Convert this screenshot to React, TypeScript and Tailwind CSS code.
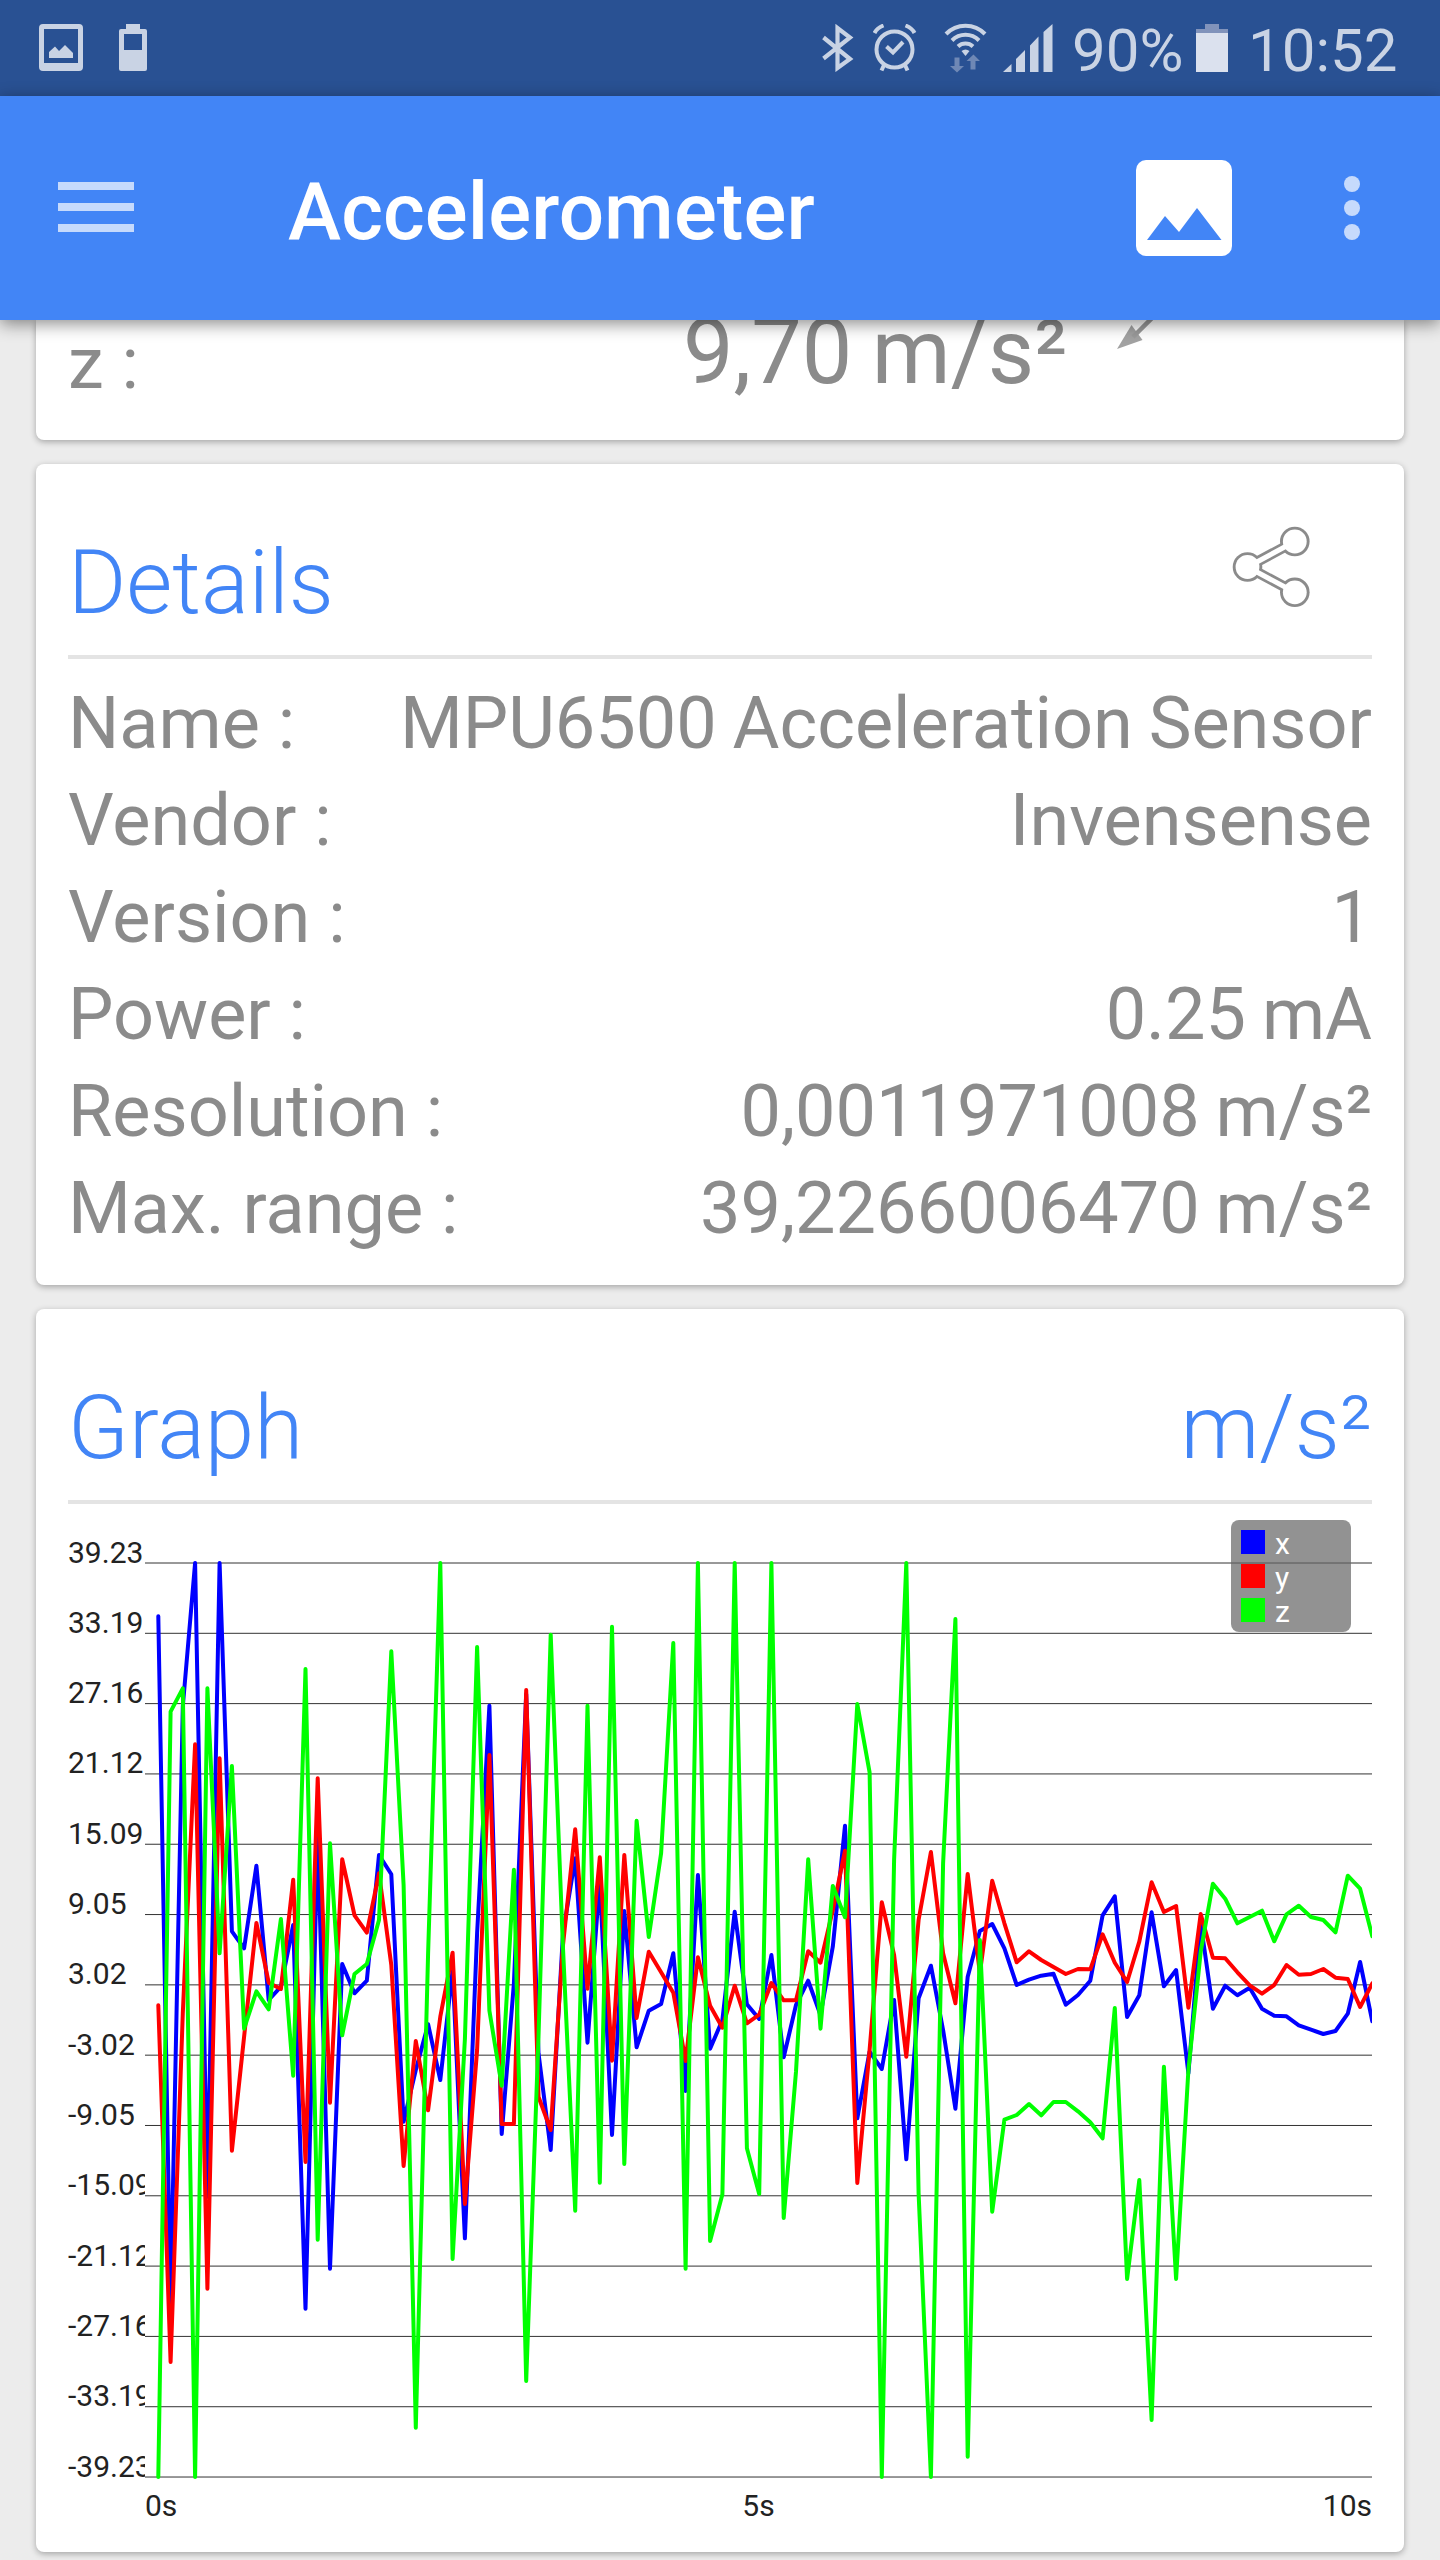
const DETAILS = [
  ["Name :", "MPU6500 Acceleration Sensor"],
  ["Vendor :", "Invensense"],
  ["Version :", "1"],
  ["Power :", "0.25 mA"],
  ["Resolution :", "0,0011971008 m/s²"],
  ["Max. range :", "39,2266006470 m/s²"],
];

const Y_LABELS = [
  "39.23", "33.19", "27.16", "21.12", "15.09", "9.05", "3.02",
  "-3.02", "-9.05", "-15.09", "-21.12", "-27.16", "-33.19", "-39.23",
];

// sample heights, 69 = +39.23 and 2811 = -39.23, one every 0.1s
const TOP = 69;
const X_SAMPLES = [
  229, 2290, 500, 69, 1970, 69, 1174, 1225, 977, 1380, 1340, 1155, 2306, 890, 2186, 1272, 1360, 1322, 945, 1003,
  1745, 1590, 1453, 1620, 1290, 2095, 1180, 497, 1782, 1330, 462, 1540, 1830, 1180, 955, 1508, 1020, 1785, 1113, 1522,
  1412, 1392, 1240, 1653, 1005, 1526, 1440, 1115, 1393, 1437, 1245, 1552, 1395, 1322, 1425, 1220, 857, 1735, 1535, 1587,
  1380, 1858, 1375, 1277, 1470, 1706, 1310, 1173, 1152, 1225, 1335, 1319, 1307, 1301, 1394, 1365, 1322, 1126, 1069, 1431,
  1366, 1117, 1339, 1290, 1600, 1150, 1406, 1337, 1366, 1343, 1406, 1427, 1429, 1456, 1469, 1482, 1473, 1421, 1266, 1444,
];
const Y_SAMPLES = [
  1396, 2466, 1420, 613, 2246, 655, 1832, 1490, 1149, 1328, 1347, 1019, 1866, 715, 1688, 958, 1126, 1178, 1000, 1275,
  1878, 1503, 1711, 1430, 1238, 1992, 1530, 645, 1752, 1752, 450, 1670, 1770, 1215, 868, 1346, 952, 1562, 945, 1434,
  1235, 1297, 1358, 1563, 1252, 1397, 1463, 1337, 1450, 1424, 1329, 1381, 1381, 1234, 1268, 1110, 932, 1929, 1530, 1087,
  1245, 1550, 1140, 936, 1240, 1390, 1002, 1300, 1022, 1150, 1267, 1234, 1260, 1281, 1302, 1287, 1288, 1183, 1268, 1326,
  1205, 1027, 1116, 1098, 1403, 1122, 1253, 1255, 1297, 1336, 1361, 1335, 1275, 1304, 1302, 1287, 1313, 1317, 1401, 1330,
];
const Z_SAMPLES = [
  2811, 515, 445, 2811, 445, 1240, 678, 1466, 1354, 1408, 1137, 1607, 387, 2099, 910, 1486, 1302, 1272, 1140, 334,
  1035, 2663, 1240, 69, 2157, 1497, 321, 1412, 1637, 989, 2523, 1490, 284, 1225, 2012, 497, 1928, 260, 1872, 842,
  1191, 940, 309, 2186, 69, 2103, 1963, 69, 1825, 1962, 69, 2034, 1595, 958, 1466, 1038, 1132, 492, 697, 2811,
  960, 69, 1960, 2811, 970, 237, 2750, 1200, 2015, 1739, 1725, 1692, 1726, 1686, 1686, 1714, 1747, 1795, 1404, 2217,
  1920, 2640, 1580, 2217, 1590, 1235, 1031, 1076, 1150, 1131, 1112, 1204, 1123, 1097, 1131, 1140, 1177, 1007, 1046, 1189,
];

const SERIES = [
  { name: "x", color: "#0000ff", samples: X_SAMPLES },
  { name: "y", color: "#ff0000", samples: Y_SAMPLES },
  { name: "z", color: "#00ff00", samples: Z_SAMPLES },
];

function toPoints(samples: number[]) {
  return samples.map((s, i) => `${(90.3 + i * 12.263).toFixed(1)},${(59 + (s - TOP) / 3).toFixed(1)}`).join(" ");
}

function StatusBar() {
  return (
    <div className="flex h-24 items-start bg-[#295193] pt-6 text-[#c9d3e4]">
      <svg className="ml-[39px] h-12 w-11" viewBox="0 0 44 48" fill="currentColor">
        <path fillRule="evenodd" d="M4 0h36a4 4 0 0 1 4 4v39a4 4 0 0 1-4 4H4a4 4 0 0 1-4-4V4a4 4 0 0 1 4-4zM5 5v34h34V5z" />
        <path d="M10 34v-6l6-5.500 4 4.500 6-6 8 8v5z" />
      </svg>
      <svg className="ml-9 h-12 w-7" viewBox="0 0 28 48" fill="currentColor">
        <path fillRule="evenodd" d="M7 0h14v5h5a2 2 0 0 1 2 2v38a2 2 0 0 1-2 2H2a2 2 0 0 1-2-2V7a2 2 0 0 1 2-2h5zM5 10v16h18V10z" />
      </svg>

      <svg className="ml-[675px] h-12 w-8" viewBox="0 0 32 48" fill="none" stroke="currentColor" strokeWidth="4.200">
        <path d="M1.500 13.500 28 35 15.500 44V4L28 13.500 1.500 34.500" />
      </svg>
      <svg className="ml-[19px] h-12 w-11" viewBox="0 0 44 48" fill="none" stroke="currentColor" strokeWidth="4">
        <circle cx="21.500" cy="25.500" r="18" />
        <path d="M13.500 22.500 20 28.500 30 18" />
        <path d="M1.500 9Q4 4 10.500 1.500M41.500 9Q39 4 32.500 1.500M11 41l-2.500 5.500M32 41l2.500 5.500" />
      </svg>
      <svg className="ml-[27px] h-[50px] w-11 -mt-px" viewBox="0 0 44 50" fill="none" stroke="currentColor" strokeWidth="4">
        <path d="M2 11a27 27 0 0 1 39 0M8 17.500a19 19 0 0 1 27 0M14 23.500a11 11 0 0 1 15 0" />
        <path d="M17.500 28q4-3 8 0l-4 5z" fill="currentColor" stroke="none" />
        <path d="M10.500 34.500h5V43H20l-7 6.500L6 43h4.500zM26.500 46.500h5V38H36l-6.500-6.500L22.500 38h4z" fill="#6f88b5" stroke="none" />
      </svg>
      <svg className="ml-[15px] h-12 w-[50px]" viewBox="0 0 50 48" fill="currentColor">
        <path d="M0 48 8.500 40v8zM13 35l9-9v22h-9zM27 21.500l8.500-9V48H27zM40.500 8 49.500 0v48h-9z" />
      </svg>
      <div className="ml-[19px] -mt-[7px] w-[115px] text-[60px] leading-[67px]">90%</div>
      <svg className="ml-[9px] h-12 w-8" viewBox="0 0 32 48">
        <path d="M9 0h14v5h9v5H0V5h9z" fill="#8193bb" />
        <path d="M0 9h32v39H0z" fill="#dbe1ee" />
      </svg>
      <div className="ml-[20px] -mt-[7px] text-[60px] leading-[67px]">10:52</div>
    </div>
  );
}

function AppBar() {
  return (
    <div className="relative z-10 flex h-56 items-center bg-[#4285f6] shadow-[0_4px_16px_rgba(0,0,0,0.45)]">
      <div className="mb-0.5 ml-[58px] flex w-[76px] flex-col gap-[13px]">
        <div className="h-2 bg-[#c6dafc]" />
        <div className="h-2 bg-[#c6dafc]" />
        <div className="h-2 bg-[#c6dafc]" />
      </div>
      <div className="ml-[154px] flex-1 pt-[7px] text-[80px] leading-[96px] font-medium tracking-[0.1px] text-white">Accelerometer</div>
      <svg className="h-24 w-24" viewBox="0 0 96 96">
        <rect width="96" height="96" rx="10" fill="#fff" />
        <path d="M11 80 29 56 43 72 61 48 85.500 80z" fill="#4285f6" />
      </svg>
      <div className="mr-20 ml-28 flex flex-col gap-2">
        <div className="size-4 rounded-full bg-[#c6dafc]" />
        <div className="size-4 rounded-full bg-[#c6dafc]" />
        <div className="size-4 rounded-full bg-[#c6dafc]" />
      </div>
    </div>
  );
}

function ShareIcon() {
  return (
    <svg className="mt-[62px] mr-[60px] h-[84px] w-20" viewBox="0 0 80 84">
      <g fill="#8b8b8b" stroke="#8b8b8b">
        <path d="M62.800 15.500 15.500 41 62.800 66.300" fill="none" strokeWidth="10.500" />
        <circle cx="62.800" cy="15.500" r="14.800" stroke="none" />
        <circle cx="15.500" cy="41" r="14.800" stroke="none" />
        <circle cx="62.800" cy="66.300" r="14.800" stroke="none" />
      </g>
      <g fill="#fff" stroke="#fff">
        <path d="M62.800 15.500 15.500 41 62.800 66.300" fill="none" strokeWidth="5" />
        <circle cx="62.800" cy="15.500" r="11.900" stroke="none" />
        <circle cx="15.500" cy="41" r="11.900" stroke="none" />
        <circle cx="62.800" cy="66.300" r="11.900" stroke="none" />
      </g>
    </svg>
  );
}

function Graph() {
  return (
    <svg className="block h-[1048px] w-[1304px]" viewBox="0 0 1304 1048">
      <defs>
        <clipPath id="labels">
          <rect x="0" y="0" width="77" height="1048" />
        </clipPath>
      </defs>
      <g stroke="#333" strokeWidth="1">
        {Y_LABELS.map((label, i) => (
          <line key={label} x1="77" x2="1304" y1={59 + i * 70.31} y2={59 + i * 70.31} />
        ))}
      </g>
      <g fontSize="30" fill="#222" clipPath="url(#labels)">
        {Y_LABELS.map((label, i) => (
          <text key={label} x="0" y={58.5 + i * 70.31}>{label}</text>
        ))}
      </g>
      <g fontSize="30" fill="#222">
        <text x="77" y="1012">0s</text>
        <text x="690.500" y="1012" textAnchor="middle">5s</text>
        <text x="1304" y="1012" textAnchor="end">10s</text>
      </g>
      {SERIES.map((s) => (
        <polyline
          key={s.name}
          points={toPoints(s.samples)}
          fill="none"
          stroke={s.color}
          strokeWidth="4"
          strokeLinecap="round"
          strokeLinejoin="round"
        />
      ))}
      <rect x="1163" y="16" width="120" height="112" rx="8" fill="rgba(100,100,100,0.7)" />
      {SERIES.map((s, i) => (
        <g key={s.name}>
          <rect x="1173" y={26 + i * 34} width="24" height="24" fill={s.color} />
          <text x="1207" y={50 + i * 34} fontSize="30" fill="#fff">{s.name}</text>
        </g>
      ))}
    </svg>
  );
}

const card = "mx-9 bg-white px-8 shadow-[0_2px_6px_rgba(0,0,0,0.3)]";

export default function App() {
  return (
    <div className="h-[2560px] w-[1440px] overflow-hidden bg-[#ececec] font-['Roboto',sans-serif] text-[#8b8b8b]">
      <StatusBar />
      <AppBar />

      <div className={`${card} flex h-[120px] items-start rounded-b-lg`}>
        <div className="w-[615px] text-[72px] leading-[87px]">z :</div>
        <div className="-mt-5 w-[434px] text-[90px] leading-[105px] whitespace-nowrap [word-spacing:-3px]">9,70 m/s²</div>
        <svg className="h-[30px] w-9" viewBox="0 0 36 30" fill="#a2a2a2">
          <path d="M0 29 14.500 5 25.500 20z" />
          <path d="M16 17 36-3" stroke="#9a9a9a" strokeWidth="4.500" />
        </svg>
      </div>

      <div className={`${card} mt-6 rounded-lg pb-7`}>
        <div className="flex h-[191px] items-start justify-between">
          <div className="pt-[67px] text-[89px] leading-[104px] font-light text-[#4285f6]">Details</div>
          <ShareIcon />
        </div>
        <div className="mb-4 h-1 bg-[#e4e4e4]" />
        {DETAILS.map(([label, value]) => (
          <div key={label} className="flex justify-between text-[72px] leading-[97px]">
            <div>{label}</div>
            <div className="[word-spacing:-2px]">{value}</div>
          </div>
        ))}
      </div>

      <div className={`${card} mt-6 rounded-lg`}>
        <div className="flex h-[191px] items-start justify-between pt-[67px] text-[89px] leading-[104px] font-light text-[#4285f6]">
          <div>Graph</div>
          <div>m/s²</div>
        </div>
        <div className="h-1 bg-[#e4e4e4]" />
        <Graph />
      </div>
    </div>
  );
}
